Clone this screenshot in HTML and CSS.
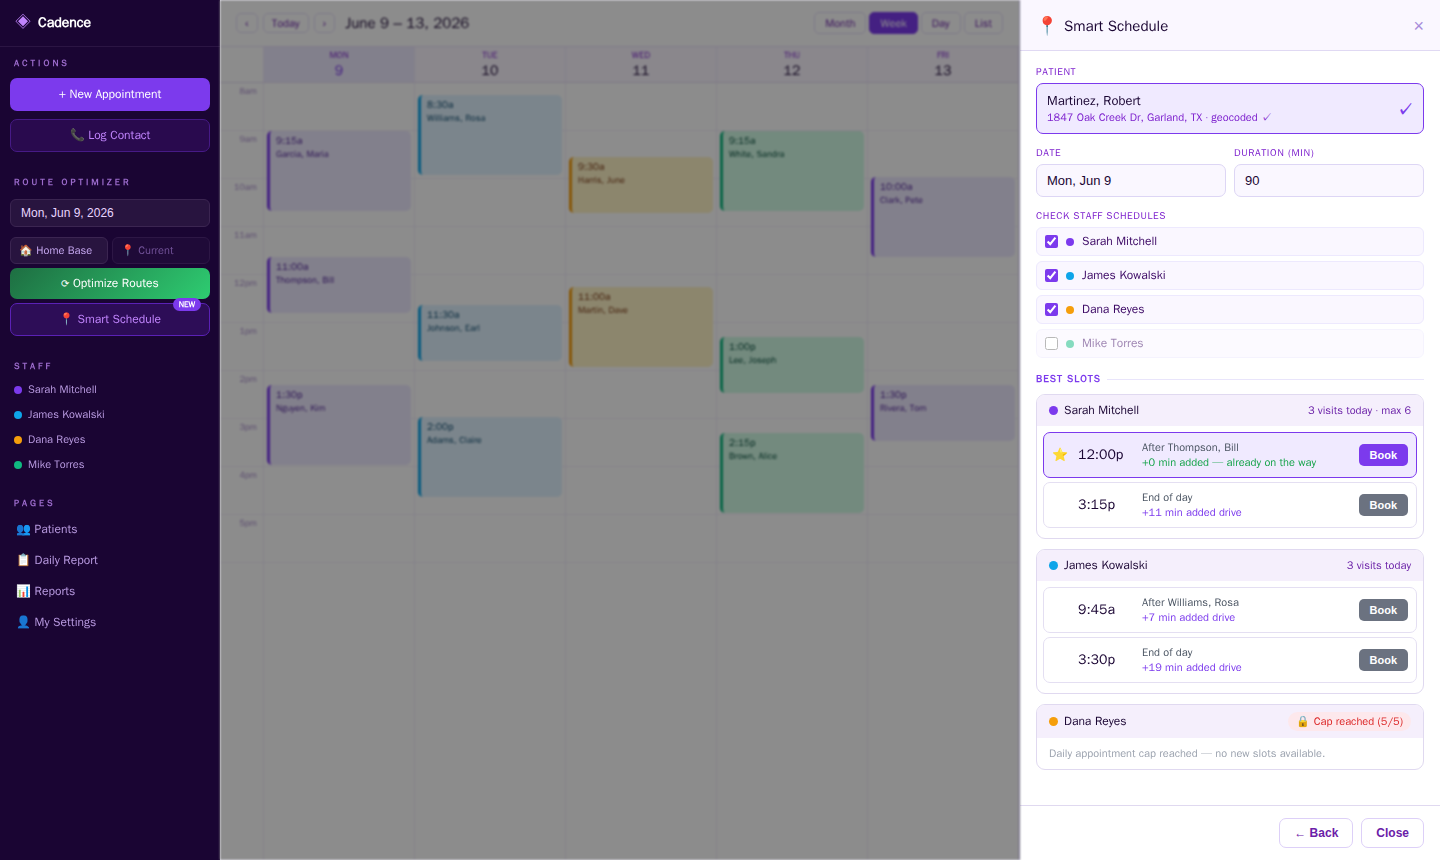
FILE: index.html
```html
<!DOCTYPE html>
<html lang="en">
<head>
<meta charset="utf-8">
<title>Cadence</title>
<link rel="stylesheet" href="styles.css">
</head>
<body>
<div class="app">
  <aside class="sidebar">
    <div class="brand"><span class="brand-mark">◈</span><span class="brand-name">Cadence</span></div>
    <section class="group">
      <h2 class="group-title">ACTIONS</h2>
      <div class="actions">
        <button class="btn btn-primary">+ New Appointment</button>
        <button class="btn btn-ghost">📞 Log Contact</button>
      </div>
    </section>
    <section class="group">
      <h2 class="group-title">ROUTE OPTIMIZER</h2>
      <input class="side-date" type="text" aria-label="Route date" value="Mon, Jun 9, 2026">
      <div class="origins">
        <button class="origin origin-on">🏠 Home Base</button>
        <button class="origin">📍 Current</button>
      </div>
      <div class="route-buttons">
        <button class="btn btn-green"><span class="spin">⟳</span> Optimize Routes</button>
        <button class="btn btn-ghost btn-smart">📍 Smart Schedule<span class="badge">NEW</span></button>
      </div>
    </section>
    <section class="group">
      <h2 class="group-title">STAFF</h2>
      <ul class="staff">
        <li><span class="dot violet"></span>Sarah Mitchell</li>
        <li><span class="dot blue"></span>James Kowalski</li>
        <li><span class="dot amber"></span>Dana Reyes</li>
        <li><span class="dot green"></span>Mike Torres</li>
      </ul>
    </section>
    <nav class="group">
      <h2 class="group-title">PAGES</h2>
      <a class="page-link" href="#">👥 Patients</a>
      <a class="page-link" href="#">📋 Daily Report</a>
      <a class="page-link" href="#">📊 Reports</a>
      <a class="page-link" href="#">👤 My Settings</a>
    </nav>
  </aside>

  <main class="calendar">
    <header class="toolbar">
      <button class="tool">‹</button>
      <button class="tool">Today</button>
      <button class="tool">›</button>
      <h1 class="range">June 9 – 13, 2026</h1>
      <div class="views">
        <button class="tool view">Month</button>
        <button class="tool view view-on">Week</button>
        <button class="tool view">Day</button>
        <button class="tool view">List</button>
      </div>
    </header>
    <div class="week">
      <div class="corner"></div>
      <div class="day-head today"><span class="dow">MON</span><span class="num">9</span></div>
      <div class="day-head"><span class="dow">TUE</span><span class="num">10</span></div>
      <div class="day-head"><span class="dow">WED</span><span class="num">11</span></div>
      <div class="day-head"><span class="dow">THU</span><span class="num">12</span></div>
      <div class="day-head"><span class="dow">FRI</span><span class="num">13</span></div>

      <div class="hours">
        <div class="hour">8am</div><div class="hour">9am</div><div class="hour">10am</div><div class="hour">11am</div><div class="hour">12pm</div>
        <div class="hour">1pm</div><div class="hour">2pm</div><div class="hour">3pm</div><div class="hour">4pm</div><div class="hour">5pm</div>
      </div>
      <div class="day">
        <div class="lines"></div>
        <div class="event ev-violet" style="top:48px;height:80px"><b>9:15a</b><span>Garcia, Maria</span></div>
        <div class="event ev-violet" style="top:174px;height:56px"><b>11:00a</b><span>Thompson, Bill</span></div>
        <div class="event ev-violet" style="top:302px;height:80px"><b>1:30p</b><span>Nguyen, Kim</span></div>
      </div>
      <div class="day">
        <div class="lines"></div>
        <div class="event ev-blue" style="top:12px;height:80px"><b>8:30a</b><span>Williams, Rosa</span></div>
        <div class="event ev-blue" style="top:222px;height:56px"><b>11:30a</b><span>Johnson, Earl</span></div>
        <div class="event ev-blue" style="top:334px;height:80px"><b>2:00p</b><span>Adams, Claire</span></div>
      </div>
      <div class="day">
        <div class="lines"></div>
        <div class="event ev-amber" style="top:74px;height:56px"><b>9:30a</b><span>Harris, June</span></div>
        <div class="event ev-amber" style="top:204px;height:80px"><b>11:00a</b><span>Martin, Dave</span></div>
      </div>
      <div class="day">
        <div class="lines"></div>
        <div class="event ev-green" style="top:48px;height:80px"><b>9:15a</b><span>White, Sandra</span></div>
        <div class="event ev-green" style="top:254px;height:56px"><b>1:00p</b><span>Lee, Joseph</span></div>
        <div class="event ev-green" style="top:350px;height:80px"><b>2:15p</b><span>Brown, Alice</span></div>
      </div>
      <div class="day">
        <div class="lines"></div>
        <div class="event ev-violet" style="top:94px;height:80px"><b>10:00a</b><span>Clark, Pete</span></div>
        <div class="event ev-violet" style="top:302px;height:56px"><b>1:30p</b><span>Rivera, Tom</span></div>
      </div>
    </div>
  </main>

  <section class="drawer" aria-label="Smart Schedule">
    <header class="drawer-head">
      <span class="pin">📍</span>
      <h2 class="drawer-title">Smart Schedule</h2>
      <button class="close" aria-label="Close panel">×</button>
    </header>
    <div class="drawer-body">
      <div class="field">
        <span class="label">PATIENT</span>
        <div class="patient">
          <div>
            <div class="patient-name">Martinez, Robert</div>
            <div class="patient-addr">1847 Oak Creek Dr, Garland, TX · geocoded <span class="tick">✓</span></div>
          </div>
          <span class="tick tick-lg">✓</span>
        </div>
      </div>
      <div class="pair">
        <div class="field"><label class="label" for="date">DATE</label><input class="input" id="date" type="text" value="Mon, Jun 9"></div>
        <div class="field"><label class="label" for="dur">DURATION (MIN)</label><input class="input" id="dur" type="text" value="90"></div>
      </div>
      <div class="field">
        <span class="label">CHECK STAFF SCHEDULES</span>
        <div class="checks">
          <label class="check"><input type="checkbox" checked><span class="dot violet"></span>Sarah Mitchell</label>
          <label class="check"><input type="checkbox" checked><span class="dot blue"></span>James Kowalski</label>
          <label class="check"><input type="checkbox" checked><span class="dot amber"></span>Dana Reyes</label>
          <label class="check check-off"><input type="checkbox"><span class="dot green"></span>Mike Torres</label>
        </div>
      </div>
      <h3 class="divider">BEST SLOTS</h3>
      <div class="cards">
        <article class="card">
          <header class="card-head"><span class="dot dot-lg violet"></span><span class="card-name">Sarah Mitchell</span><span class="card-note">3 visits today · max 6</span></header>
          <div class="slots">
            <div class="slot slot-best"><span class="star">⭐</span><span class="time">12:00p</span><div class="info">After Thompson, Bill<br><span class="drive drive-good">+0 min added — already on the way</span></div><button class="book book-best">Book</button></div>
            <div class="slot"><span class="star"></span><span class="time">3:15p</span><div class="info">End of day<br><span class="drive">+11 min added drive</span></div><button class="book">Book</button></div>
          </div>
        </article>
        <article class="card">
          <header class="card-head"><span class="dot dot-lg blue"></span><span class="card-name">James Kowalski</span><span class="card-note">3 visits today</span></header>
          <div class="slots">
            <div class="slot"><span class="star"></span><span class="time">9:45a</span><div class="info">After Williams, Rosa<br><span class="drive">+7 min added drive</span></div><button class="book">Book</button></div>
            <div class="slot"><span class="star"></span><span class="time">3:30p</span><div class="info">End of day<br><span class="drive">+19 min added drive</span></div><button class="book">Book</button></div>
          </div>
        </article>
        <article class="card">
          <header class="card-head"><span class="dot dot-lg amber"></span><span class="card-name">Dana Reyes</span><span class="cap">🔒 Cap reached (5/5)</span></header>
          <p class="empty">Daily appointment cap reached — no new slots available.</p>
        </article>
      </div>
    </div>
    <footer class="drawer-foot">
      <button class="foot-btn">← Back</button>
      <button class="foot-btn">Close</button>
    </footer>
  </section>
</div>
</body>
</html>
```
FILE: styles.css
```css
* { box-sizing: border-box; }
body { margin: 0; font-family: "WenQuanYi Zen Hei", "Liberation Sans", sans-serif; color: #1a0533; background: #f5f3ff; }
h1, h2, h3, p, ul { margin: 0; padding: 0; font-weight: 400; }
button { font-family: inherit; cursor: pointer; }
.app { display: flex; height: 100vh; overflow: hidden; }

.dot { width: 8px; height: 8px; border-radius: 50%; flex: none; }
.dot-lg { width: 9px; height: 9px; }
.violet { background: #7c3aed; }
.blue { background: #0ea5e9; }
.amber { background: #f59e0b; }
.green { background: #10b981; }

/* Sidebar */
.sidebar { width: 220px; flex: none; background: #1a0533; overflow: hidden; }
.brand { display: flex; align-items: center; gap: 7px; height: 47px; padding: 0 15px 1px; border-bottom: 1px solid #2b1543; }
.brand-mark { font-size: 16px; color: #c084fc; }
.brand-name { font-size: 14px; font-weight: 800; color: #fff; }
.group { padding: 10px 10px 9px; }
.group-title { font-size: 9px; font-weight: 800; line-height: 12px; letter-spacing: 3px; color: #9b6bcb; padding: 0 4px; margin-bottom: 5px; }
.actions { display: flex; flex-direction: column; gap: 8px; margin: 9px 0 5px; }
.btn { width: 100%; height: 33px; border: 0; border-radius: 7px; font-size: 12px; color: #fff; }
.btn-primary { background: #7c3aed; }
.btn-ghost { background: #290a4e; border: 1px solid #461a86; color: #c084fc; }
.btn-green { height: 31px; background: linear-gradient(135deg, #1e6e42, #2ecc71); }
.spin { font-size: 10px; }
.btn-smart { position: relative; background: #2d0d57; border-color: #5b21b6; }
.badge { position: absolute; top: -6px; right: 8px; padding: 0 6px; border-radius: 8px; background: #7c3aed; color: #fff; font-size: 8px; font-weight: 800; line-height: 13px; }
.side-date { display: block; width: 100%; height: 28px; margin-top: 11px; padding: 0 10px; border: 1px solid #3b2551; border-radius: 6px; background: #28143f; color: #e9d5ff; font: 12px "Liberation Sans", sans-serif; }
.origins { display: grid; grid-template-columns: 1fr 1fr; gap: 4px; margin: 10px 0 4px; }
.origin { height: 27px; padding: 0 8px; border: 1px solid #3b2551; border-radius: 6px; background: #28143f; color: #c4a6ee; font-size: 11px; text-align: left; }
.origin:not(.origin-on) { background: #1f0a38; border-color: #2d1745; color: #73539a; }
.route-buttons { display: flex; flex-direction: column; gap: 4px; margin-bottom: 5px; }
.staff { list-style: none; margin-bottom: 10px; }
.group:has(.staff) { padding-bottom: 0; }
.staff li { display: flex; align-items: center; gap: 6px; height: 25px; padding: 0 4px; font-size: 11px; color: #b89ae0; }
.page-link { display: block; padding: 0 6px; font-size: 12px; line-height: 31px; color: #b89ae0; text-decoration: none; }

/* Calendar, dimmed behind the drawer */
.calendar { flex: 1; min-width: 0; display: flex; flex-direction: column; background: #fff; border-right: 1px solid #ddd6fe; filter: blur(1px) brightness(0.55); }
.toolbar { display: flex; align-items: center; gap: 5px; height: 47px; flex: none; padding: 0 16px; border-bottom: 1px solid #e9e0f8; }
.tool { height: 20px; padding: 0 8px; border: 1px solid #e4dcf5; border-radius: 5px; background: #fff; color: #6b21a8; font-size: 11px; }
.range { margin-left: 5px; font-size: 15px; font-weight: 600; }
.views { display: flex; gap: 3px; margin-left: auto; }
.view { height: 22px; padding: 0 10px; }
.view-on { background: #7c3aed; border-color: #7c3aed; color: #fff; }
.week { flex: 1; display: grid; grid-template-columns: 44px repeat(5, 1fr); grid-template-rows: 36px 1fr; }
.corner, .day-head { border-right: 1px solid #efe8fa; border-bottom: 1px solid #e4dcf0; }
.day-head { display: flex; flex-direction: column; align-items: center; padding-top: 2px; background: #faf5ff; }
.today { background: #ede9fe; }
.dow { font-size: 9px; line-height: 13px; font-weight: 600; color: #7e22ce; }
.num { font-size: 14px; line-height: 18px; font-weight: 600; }
.today .num { color: #7c3aed; }
.hours, .day { border-right: 1px solid #f0eaf8; }
.hour { height: 48px; padding: 2px 6px 0 0; border-bottom: 1px solid #f3eefa; text-align: right; font-size: 9px; line-height: 12px; color: #a78bca; }
.day { position: relative; }
.lines { height: 480px; background: repeating-linear-gradient(#fff 0 47px, #f3eefa 47px 48px); }
.event { position: absolute; left: 3px; right: 3px; padding: 3px 6px; border-left: 3px solid; border-radius: 5px; }
.event b, .event span { display: block; }
.event b { font-size: 10px; line-height: 13px; font-weight: 600; }
.event span { font-size: 9px; line-height: 14px; }
.ev-violet { background: #ede9fe; border-color: #7c3aed; color: #4c1d95; }
.ev-blue { background: #e0f2fe; border-color: #0ea5e9; color: #0c4a6e; }
.ev-amber { background: #fef3c7; border-color: #f59e0b; color: #78350f; }
.ev-green { background: #d1fae5; border-color: #10b981; color: #064e3b; }

/* Drawer */
.drawer { width: 420px; flex: none; display: flex; flex-direction: column; background: #fff; }
.drawer-head { display: flex; align-items: center; gap: 6px; height: 51px; flex: none; padding: 2px 16px 0; background: #faf7ff; border-bottom: 1px solid #e0d9f3; }
.pin { font-size: 18px; }
.drawer-title { font-size: 15px; }
.close { margin-left: auto; padding: 0; border: 0; background: none; color: #a78bda; font: 18px "Liberation Sans", sans-serif; }
.drawer-body { flex: 1; min-height: 0; overflow: hidden; padding: 14px 16px; }
.field { margin-bottom: 12px; }
.label { display: block; margin-bottom: 4px; font-size: 10px; line-height: 14px; letter-spacing: 0.06em; color: #7e22ce; }
.patient { display: flex; align-items: center; justify-content: space-between; height: 51px; padding: 0 10px; border: 1px solid #7c3aed; border-radius: 7px; background: #f0eaff; }
.patient-name { font-size: 13px; line-height: 18px; }
.patient-addr { font-size: 11px; line-height: 15px; color: #7e22ce; }
.tick { font-family: "IPAGothic", "WenQuanYi Zen Hei", sans-serif; line-height: 1; }
.tick-lg { font-size: 16px; font-weight: 800; color: #7c3aed; }
.pair { display: grid; grid-template-columns: 1fr 1fr; gap: 8px; }
.input { width: 100%; height: 33px; padding: 0 10px; border: 1px solid #ddd6f5; border-radius: 7px; background: #faf7ff; color: #1a0533; font: 13px "Liberation Sans", sans-serif; }
.checks { display: flex; flex-direction: column; gap: 5px; }
.check { display: flex; align-items: center; gap: 8px; height: 29px; padding: 0 8px; border: 1px solid #ede9fe; border-radius: 6px; background: #faf7ff; color: #3b0764; font-size: 12px; }
.check input { width: 13px; height: 13px; margin: 0; accent-color: #7c3aed; }
.check-off { opacity: 0.5; }
.divider { display: flex; align-items: center; gap: 6px; margin: 14px 0 8px; font-size: 10px; line-height: 14px; font-weight: 800; letter-spacing: 1px; color: #7c3aed; }
.divider::after { content: ""; flex: 1; height: 1px; background: #e9e5fb; }
.cards { display: flex; flex-direction: column; gap: 10px; }
.card { border: 1px solid #e0d9f0; border-radius: 9px; overflow: hidden; }
.card-head { display: flex; align-items: center; gap: 6px; min-height: 31px; padding: 7px 12px; background: #f5effc; }
.card-name { font-size: 12px; line-height: 17px; }
.card-note { margin-left: auto; font-size: 11px; line-height: 15px; color: #6b21a8; }
.cap { margin-left: auto; padding: 0 8px; border-radius: 10px; background: #fde8ec; color: #dc2626; font-size: 11px; line-height: 19px; }
.slots { display: flex; flex-direction: column; gap: 4px; padding: 6px 6px 10px; }
.slot { display: flex; align-items: center; gap: 10px; height: 46px; padding: 0 8px; border: 1px solid #e4dff2; border-radius: 7px; }
.slot-best { border-color: #7c3aed; background: #f0eaff; }
.star { width: 16px; font-size: 13px; }
.time { width: 54px; font-size: 14px; }
.info { flex: 1; font-size: 11px; line-height: 15px; color: #4b5563; }
.drive { color: #7c3aed; }
.drive-good { color: #16a34a; }
.book { height: 22px; padding: 0 11px; border: 0; border-radius: 5px; background: #6b7280; color: #fff; font: bold 11px "Liberation Sans", sans-serif; }
.book-best { background: #7c3aed; }
.empty { padding: 8px 12px; font-size: 11px; line-height: 15px; color: #9ca3af; }
.drawer-foot { display: flex; justify-content: flex-end; gap: 8px; padding: 12px 16px; border-top: 1px solid #e0d9f0; }
.foot-btn { height: 30px; padding: 0 14px; border: 1px solid #ddd0f8; border-radius: 7px; background: #fff; color: #6b21a8; font: bold 12px "Liberation Sans", sans-serif; }
```
